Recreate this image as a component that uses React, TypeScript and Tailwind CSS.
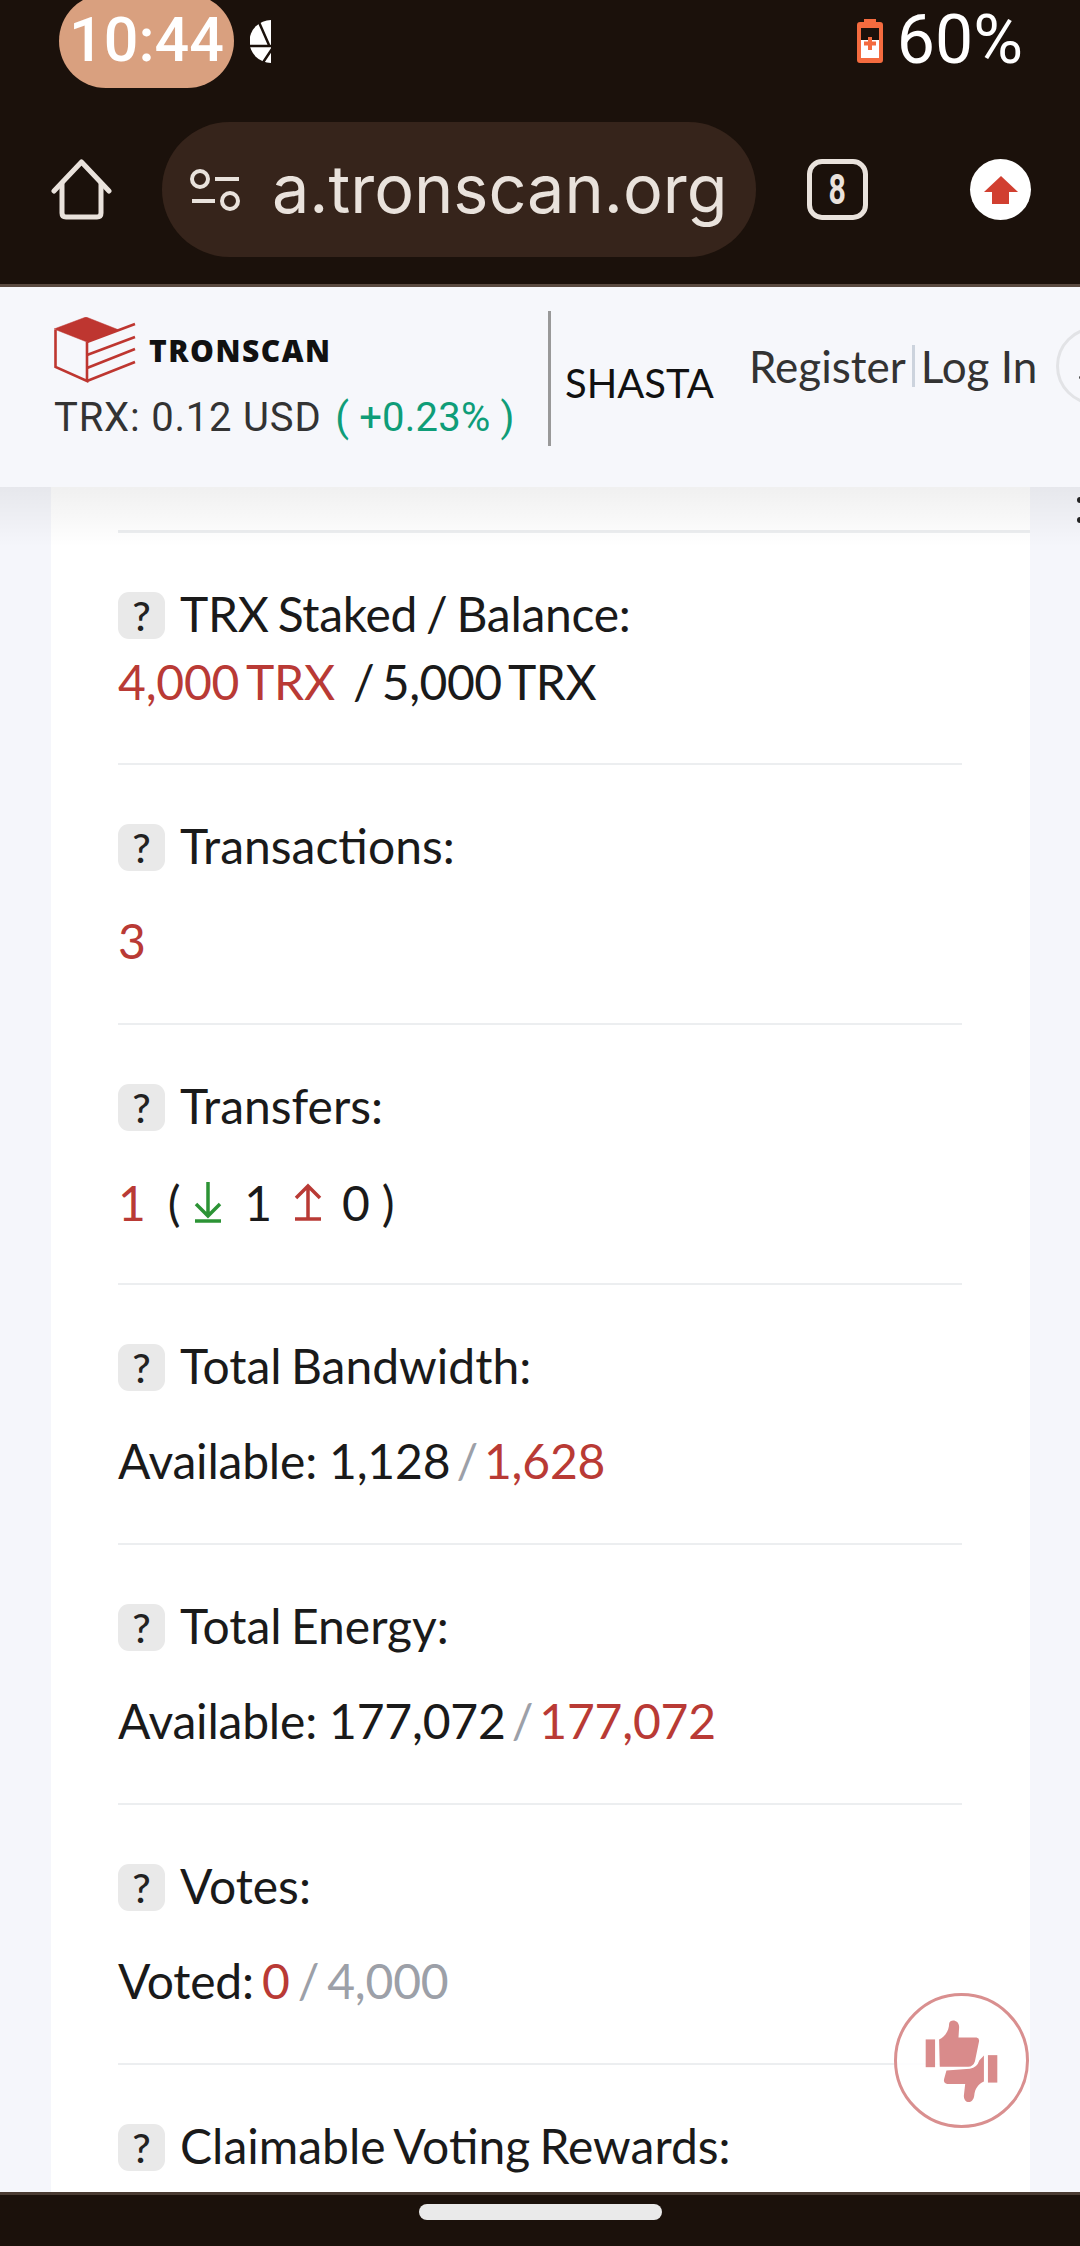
const lato = 'font-["Lato",sans-serif]';

function QuestionBadge() {
  return (
    <span className="flex h-[47px] w-[47px] shrink-0 items-center justify-center rounded-[11px] bg-[#e9e9e9] text-[41px] font-medium leading-none tracking-normal text-[#222]">
      ?
    </span>
  );
}

function Label({ text, tight }: { text: string; tight?: boolean }) {
  return (
    <div className={`flex h-[47px] items-center gap-[15px] text-[#1a1a1a] [word-spacing:-3px] ${tight ? 'tracking-[-0.3px]' : ''}`}>
      <QuestionBadge />
      <span className="mt-[-3px]">{text}</span>
    </div>
  );
}

function Row({ label, first, children }: { label: string; first?: boolean; children: React.ReactNode }) {
  return (
    <div className={`border-b-2 border-[#eceef0] pt-[59px] ${first ? 'pb-[50px]' : 'pb-[51px]'}`}>
      <Label text={label} tight={first} />
      <div className={`h-[60px] whitespace-pre leading-[57px] tracking-[-0.2px] text-[#1a1a1a] ${first ? 'mt-[14px]' : 'mt-[41px]'}`}>
        {children}
      </div>
    </div>
  );
}

function Ratio({ used, total }: { used: string; total: string }) {
  return (
    <>
      Available:{' '}
      <span className="[word-spacing:-6px]">
        {used} <span className="text-[#9ca0a8]">/</span> <span className="text-[#b93a35]">{total}</span>
      </span>
    </>
  );
}

function DownArrow() {
  return (
    <svg width="28" height="41" viewBox="0 0 28 41" fill="none" stroke="#2c9335" strokeWidth="3.5" className="ml-[14px] mr-[22px]">
      <path d="M14 0V34M2 22L14 34L26 22" />
      <path d="M1 39H27" />
    </svg>
  );
}

function UpArrow() {
  return (
    <svg width="28" height="38" viewBox="0 0 28 38" fill="none" stroke="#b93a35" strokeWidth="3.5" className="ml-[22px] mr-[20px]">
      <path d="M14 3V36M2 15L14 3L26 15" />
      <path d="M1 36H27" />
    </svg>
  );
}

function TronscanLogo() {
  return (
    <svg width="82" height="66" viewBox="0 0 82 66" fill="none" stroke="#be3630" strokeWidth="2.6">
      <path d="M0 12L32 0L65 13L33 25Z" fill="#be3630" strokeWidth="0.5" />
      <path d="M1.5 13V50L33 64V25" />
      <path d="M33 25L81 7M33 38L81 20M33 51L81 32M33 64L81 45" />
    </svg>
  );
}

function ThumbsIcon() {
  return (
    <svg width="77" height="87" viewBox="190 165 230 260" fill="#d98b8b">
      <rect x="198" y="232" width="28" height="83" />
      <path d="M238 232C255 225 268 205 268 185C270 170 298 172 298 195L296 226L350 226Q360 228 357 240L345 298Q340 313 325 314L240 314Z" />
      <rect x="384" y="279" width="28" height="82" />
      <path d="M372 280L372 358C355 365 345 380 343 400C340 425 312 425 312 400L316 365L262 365Q250 362 253 350L260 325L330 320Q352 316 358 295Z" />
    </svg>
  );
}

export default function App() {
  return (
    <div className={`flex h-[2246px] w-[1080px] flex-col overflow-hidden bg-[#1b110b] ${lato}`}>
      {/* phone status bar + browser toolbar */}
      <div className="h-[284px] shrink-0">
        <div className="flex h-[88px] items-start font-['Roboto',sans-serif] text-white">
          <div className="ml-[59px] mt-[-6px] flex h-[94px] w-[175px] items-center justify-center rounded-full bg-[#d9a07f] text-[61px] font-medium">
            10:44
          </div>
          <svg width="22" height="44" viewBox="0 0 22 44" className="ml-[16px] mt-[20px]">
            <path d="M21 0A21.5 21.5 0 0 0 21 43Z" fill="white" />
            <path d="M8 0L19 25M0 26H22M22 29L12 44" stroke="#1b110b" strokeWidth="2.5" />
          </svg>
          <svg width="26" height="44" viewBox="0 0 26 44" className="ml-auto mt-[19px]">
            <path d="M7 0H19V3H23Q26 3 26 6V41Q26 44 23 44H3Q0 44 0 41V6Q0 3 3 3H7Z" fill="#f46b3f" />
            <rect x="4" y="9" width="18" height="12" fill="#1b110b" />
            <rect x="4" y="21" width="18" height="18" fill="white" />
            <path d="M11 18H15V22.5H19V26.5H15V31H11V26.5H7V22.5H11Z" fill="#f46b3f" />
          </svg>
          <span className="ml-[14px] mr-[57px] mt-[9px] text-[68px] leading-[62px]">60%</span>
        </div>
        <div className="mt-[34px] flex h-[135px] items-center">
          <svg width="61" height="61" viewBox="0 0 61 61" fill="none" stroke="#e9e2dc" strokeWidth="5" strokeLinecap="round" strokeLinejoin="round" className="ml-[51px]">
            <path d="M3 32L30.5 3L58 32" />
            <path d="M11 25V54Q11 58 15 58H46Q50 58 50 54V25" />
          </svg>
          <div className="ml-[50px] flex h-[135px] w-[594px] items-center rounded-full bg-[#36241b] text-[#e9e2dc]">
            <svg width="52" height="44" viewBox="0 0 52 44" fill="none" stroke="#e9e2dc" strokeWidth="4" className="ml-[27px]">
              <circle cx="11" cy="11" r="8" />
              <path d="M26 11H50M3 33H26" />
              <circle cx="41" cy="33" r="8" />
            </svg>
            <span className="ml-[31px] font-['Inter',sans-serif] text-[66.5px] leading-none">a.tronscan.org</span>
          </div>
          <div className="ml-[51px] flex h-[61px] w-[61px] items-center justify-center rounded-[15px] border-[5px] border-[#e9e2dc] font-['Roboto',sans-serif] text-[42px] font-bold leading-none text-[#e9e2dc]">
            <span className="scale-x-[0.72]">8</span>
          </div>
          <div className="ml-[102px] flex h-[61px] w-[61px] items-center justify-center rounded-full bg-white">
            <svg width="34" height="28" viewBox="0 0 34 28">
              <path d="M17 0L34 16H25V28H8V16H0Z" fill="#d13f30" />
            </svg>
          </div>
        </div>
      </div>

      {/* site header */}
      <div className="flex h-[203px] shrink-0 border-t-[3px] border-[#5a4a40] bg-[#f6f7fb]">
        <div className="ml-[54px] w-[494px] shrink-0">
          <div className="mt-[30px] flex h-[66px] items-center">
            <TronscanLogo />
            <span className="ml-[13px] font-['Open_Sans',sans-serif] text-[30px] font-extrabold tracking-[1.5px] text-[#111]">TRONSCAN</span>
          </div>
          <div className="mt-[9px] whitespace-pre font-['Roboto',sans-serif] text-[40px] leading-[52px] tracking-[0.8px] text-[#333]">
            TRX: 0.12 USD <span className="ml-[3px] tracking-[0.2px] text-[#0f9d78]">( +0.23% )</span>
          </div>
        </div>
        <div className="mt-[24px] h-[135px] w-[3px] shrink-0 bg-[#999]" />
        <span className="ml-[14px] mt-[66px] text-[40px] leading-[60px] text-[#111]">SHASTA</span>
        <div className="ml-[35px] mt-[49px] flex h-[60px] items-center whitespace-nowrap text-[44px] text-[#333]">
          <span>Register</span>
          <span className="mx-[6px] h-[42px] w-[3px] bg-[#ccd3dd]" />
          <span>Log In</span>
          <span className="ml-[19px] flex h-[78px] w-[78px] shrink-0 items-center rounded-full border-[3px] border-[#e2e3e6] pl-[20px] pt-[22px]">
            <span className="h-[3px] w-[3px] rounded-full bg-[#444]" />
          </span>
        </div>
      </div>

      {/* scrolled page content */}
      <div className="relative min-h-0 flex-1 overflow-hidden bg-[#f5f6fb]">
        <div className="ml-[51px] h-full w-[979px] bg-white text-[48px]">
          <div className="ml-[67px] h-[46px] border-b-[3px] border-[#eceef0]" />
          <div className="ml-[67px] mr-[68px]">
            <Row label="TRX Staked / Balance:" first>
              <span className="text-[#b93a35] [word-spacing:-4px]">4,000 TRX</span>
              <span className="ml-[18px] tracking-[-0.5px] [word-spacing:-4px]">/ 5,000 TRX</span>
            </Row>
            <Row label="Transactions:">
              <span className="text-[#b93a35]">3</span>
            </Row>
            <Row label="Transfers:">
              <div className="flex h-full items-center">
                <span className="text-[#b93a35]">1</span>
                <span className="ml-[22px]">(</span>
                <DownArrow />
                <span>1</span>
                <UpArrow />
                <span>0 )</span>
              </div>
            </Row>
            <Row label="Total Bandwidth:">
              <Ratio used="1,128" total="1,628" />
            </Row>
            <Row label="Total Energy:">
              <Ratio used="177,072" total="177,072" />
            </Row>
            <Row label="Votes:">
              <span className="[word-spacing:-4px]">
                Voted: <span className="text-[#b93a35]">0</span> <span className="text-[#9ca0a8]">/ 4,000</span>
              </span>
            </Row>
            <div className="pt-[59px]">
              <Label text="Claimable Voting Rewards:" />
            </div>
          </div>
        </div>
        {/* header drop shadow */}
        <div className="absolute inset-x-0 top-0 h-[60px] bg-linear-to-b from-black/[0.06] to-transparent" />
        <div className="absolute right-[-3px] top-[-10px] flex flex-col gap-[14px]">
          <span className="h-[6px] w-[6px] rounded-full bg-[#222]" />
          <span className="h-[6px] w-[6px] rounded-full bg-[#222]" />
          <span className="h-[6px] w-[6px] rounded-full bg-[#222]" />
        </div>
        <div className="absolute bottom-[64px] right-[51px] flex h-[135px] w-[135px] items-center justify-center rounded-full border-[3px] border-[#d98f8f] bg-white/90">
          <ThumbsIcon />
        </div>
      </div>

      {/* gesture bar */}
      <div className="flex h-[54px] shrink-0 justify-center border-t-[3px] border-[#4a3b32] pt-[9px]">
        <div className="h-[16px] w-[243px] rounded-full bg-[#eaeaea]" />
      </div>
    </div>
  );
}
